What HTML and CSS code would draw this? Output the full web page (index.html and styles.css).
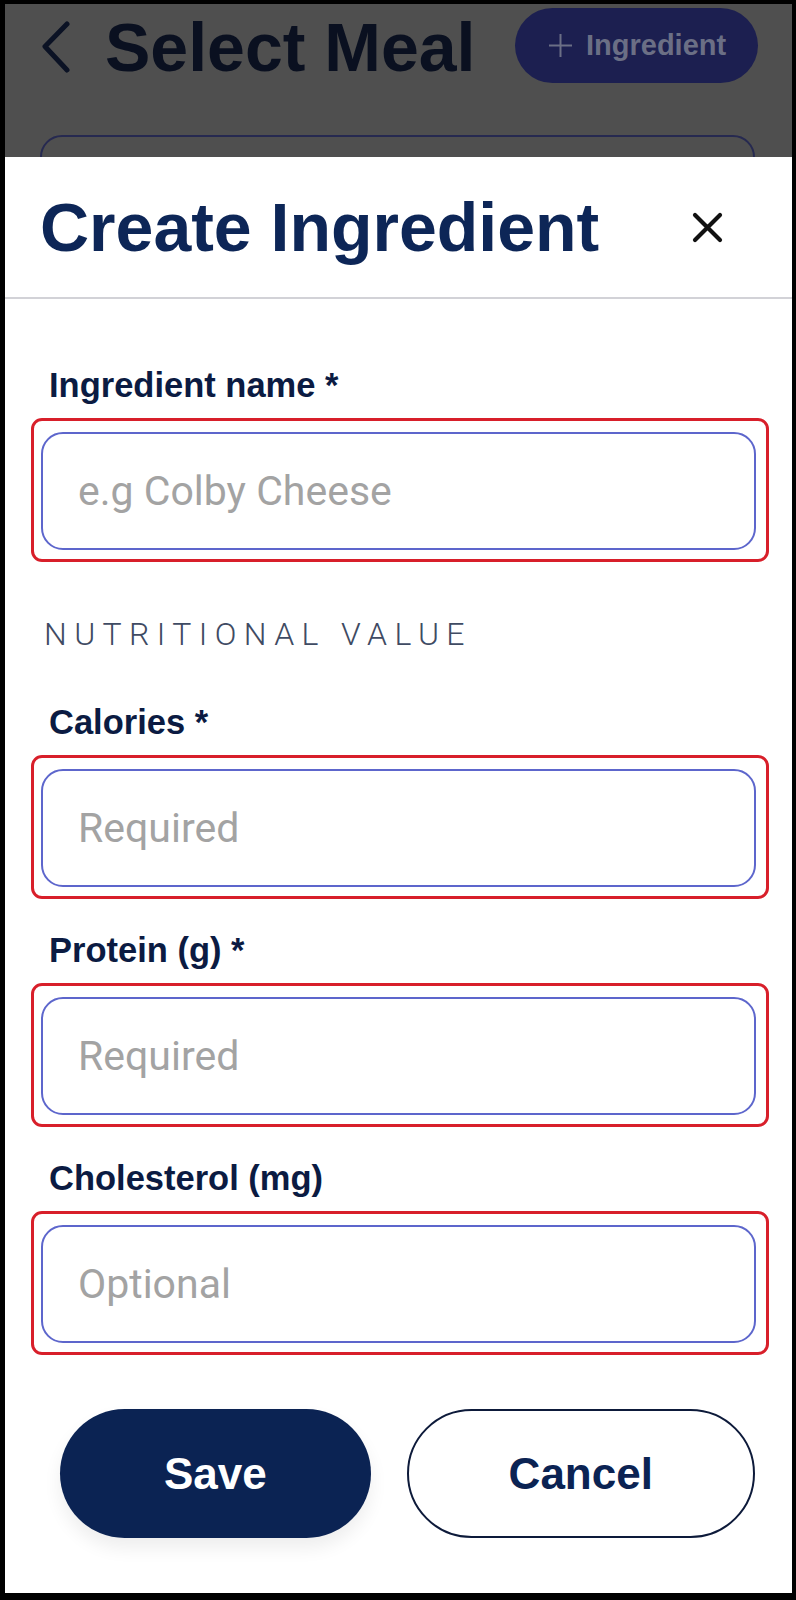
FILE: index.html
```html
<!DOCTYPE html>
<html lang="en">
<head>
<meta charset="utf-8">
<title>Create Ingredient</title>
<link rel="stylesheet" href="styles.css">
</head>
<body>
<div class="screen">
  <div class="backdrop">
    <div class="topbar">
      <svg class="chevron" width="30" height="52" viewBox="0 0 30 52"><path d="M26 3 L4 25.5 L26 49" fill="none" stroke="#0b1224" stroke-width="5" stroke-linecap="round" stroke-linejoin="round"/></svg>
      <h1 class="page-title">Select Meal</h1>
      <div class="add-btn">
        <svg width="23" height="23" viewBox="0 0 23 23"><path d="M11.5 0 V23 M0 11.5 H23" stroke="#6b6f85" stroke-width="2"/></svg>
        <span>Ingredient</span>
      </div>
    </div>
    <div class="bg-card"></div>
  </div>
  <div class="sheet">
    <div class="sheet-head">
      <h2 class="sheet-title">Create Ingredient</h2>
      <svg class="close" width="31" height="31" viewBox="0 0 31 31"><path d="M3 3 L28 28 M28 3 L3 28" stroke="#111" stroke-width="4.2" stroke-linecap="round"/></svg>
    </div>
    <form class="form">
      <div class="field">
        <label class="label">Ingredient name *</label>
        <div class="mark"><input class="input" placeholder="e.g Colby Cheese"></div>
      </div>
      <div class="section">NUTRITIONAL VALUE</div>
      <div class="field">
        <label class="label">Calories *</label>
        <div class="mark"><input class="input" placeholder="Required"></div>
      </div>
      <div class="field">
        <label class="label">Protein (g) *</label>
        <div class="mark"><input class="input" placeholder="Required"></div>
      </div>
      <div class="field">
        <label class="label">Cholesterol (mg)</label>
        <div class="mark"><input class="input" placeholder="Optional"></div>
      </div>
      <div class="actions">
        <button type="button" class="btn btn-save">Save</button>
        <button type="button" class="btn btn-cancel">Cancel</button>
      </div>
    </form>
  </div>
</div>
</body>
</html>
```
FILE: styles.css
```css
* { box-sizing: border-box; }
html, body { margin: 0; padding: 0; background: #000; }
.screen {
  width: 796px;
  height: 1600px;
  border-style: solid;
  border-color: #000;
  border-width: 4px 4px 7px 5px;
  display: flex;
  flex-direction: column;
  background: #fff;
  font-family: "Liberation Sans", Arial, sans-serif;
}
.backdrop {
  height: 153px;
  flex: none;
  background: #4f4f4f;
  overflow: hidden;
}
.topbar {
  display: flex;
  align-items: center;
  height: 79px;
  padding: 4px 34px 0 36px;
}
.chevron { flex: none; margin-top: 2px; }
.page-title {
  margin: 2px 0 0 34px;
  font-size: 68px;
  line-height: 1;
  font-weight: 700;
  color: #0a1020;
}
.add-btn {
  margin-left: auto;
  width: 243px;
  height: 75px;
  border-radius: 38px;
  background: #1c1f50;
  display: flex;
  align-items: center;
  gap: 14px;
  padding-left: 34px;
  color: #6b6f85;
  font-size: 29px;
  font-weight: 700;
}
.bg-card {
  margin: 52px 37px 0 35px;
  height: 200px;
  border: 2px solid #262950;
  border-radius: 22px;
}
.sheet {
  flex: 1;
  background: #fff;
  display: flex;
  flex-direction: column;
}
.sheet-head {
  display: flex;
  align-items: center;
  justify-content: space-between;
  padding: 30px 69px 30px 35px;
  border-bottom: 2px solid #d2d2d7;
}
.sheet-title {
  margin: 0;
  font-size: 68px;
  line-height: 80px;
  font-weight: 700;
  color: #0d2657;
}
.close { flex: none; }
.form {
  display: flex;
  flex-direction: column;
  padding: 66px 23px 0 26px;
}
.field {
  display: flex;
  flex-direction: column;
  gap: 13px;
}
.field + .field { margin-top: 31px; }
.label {
  margin-left: 18px;
  font-size: 34.5px;
  line-height: 40px;
  font-weight: 700;
  color: #0b1b42;
}
.mark {
  border: 3px solid #d81f2a;
  border-radius: 11px;
  padding: 11px 10px 9px 7px;
}
.input {
  display: block;
  width: 100%;
  height: 118px;
  border: 2px solid #5d66cc;
  border-radius: 22px;
  padding: 0 0 0 35px;
  font-family: Roboto, "Liberation Sans", sans-serif;
  font-size: 41px;
  color: #222;
  background: #fff;
  outline: none;
}
.input::placeholder { color: #a3a3a3; opacity: 1; }
.section {
  margin: 52px 0 48px 13px;
  font-family: Roboto, "Liberation Sans", sans-serif;
  font-weight: 300;
  font-size: 32px;
  line-height: 40px;
  letter-spacing: 7.4px;
  color: #3f4b63;
}
.actions {
  display: flex;
  gap: 36px;
  margin-top: 54px;
  padding: 0 14px 0 29px;
}
.btn {
  height: 129px;
  border-radius: 65px;
  font-family: "Liberation Sans", Arial, sans-serif;
  font-size: 44px;
  font-weight: 700;
  cursor: pointer;
}
.btn-save {
  width: 311px;
  background: #0b2353;
  color: #fff;
  border: none;
  box-shadow: 0 10px 18px rgba(0, 0, 0, 0.07);
}
.btn-cancel {
  width: 349px;
  background: #fff;
  color: #0b2353;
  border: 2px solid #0d1a3a;
}
```
